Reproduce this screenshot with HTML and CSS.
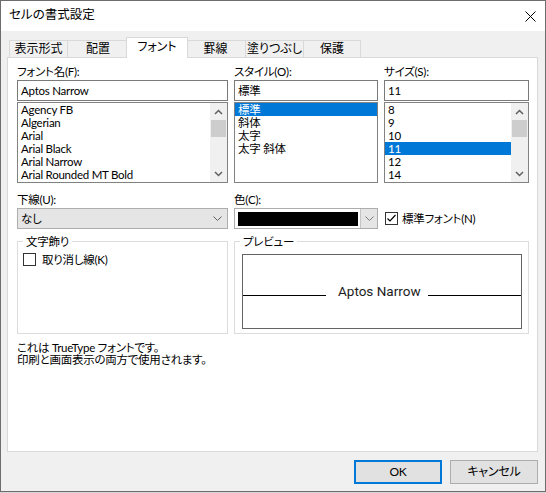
FILE: index.html
```html
<!DOCTYPE html>
<html lang="ja">
<head>
<meta charset="utf-8">
<title>セルの書式設定</title>
<link rel="stylesheet" href="styles.css">
</head>
<body>
<div class="dialog">
  <div class="titlebar">
    <span class="title">セルの書式設定</span>
    <svg class="close" width="11" height="11" viewBox="0 0 11 11"><path d="M0.5 0.5L10.5 10.5M10.5 0.5L0.5 10.5" stroke="#000" stroke-width="1" fill="none"/></svg>
  </div>
  <div class="tabs">
    <div class="tab tab-fmt">表示形式</div>
    <div class="tab tab-align">配置</div>
    <div class="tab tab-font active">フォント</div>
    <div class="tab tab-border">罫線</div>
    <div class="tab tab-fill">塗りつぶし</div>
    <div class="tab tab-protect">保護</div>
  </div>
  <div class="panel">
    <div class="cols">
      <div class="col">
        <div class="label">フォント名(F):</div>
        <div class="textbox">Aptos Narrow</div>
        <div class="list">
          <div class="items">
            <div class="item">Agency FB</div>
            <div class="item">Algerian</div>
            <div class="item">Arial</div>
            <div class="item">Arial Black</div>
            <div class="item">Arial Narrow</div>
            <div class="item">Arial Rounded MT Bold</div>
          </div>
          <div class="sb">
            <div class="sb-btn"><svg width="9" height="6" viewBox="0 0 9 6"><path d="M1 5L4.5 1.5L8 5" fill="none" stroke="#606060" stroke-width="1.5"/></svg></div>
            <div class="sb-thumb"></div>
            <div class="sb-space"></div>
            <div class="sb-btn"><svg width="9" height="6" viewBox="0 0 9 6"><path d="M1 1L4.5 4.5L8 1" fill="none" stroke="#606060" stroke-width="1.5"/></svg></div>
          </div>
        </div>
      </div>
      <div class="col">
        <div class="label">スタイル(O):</div>
        <div class="textbox">標準</div>
        <div class="list">
          <div class="items">
            <div class="item sel">標準</div>
            <div class="item">斜体</div>
            <div class="item">太字</div>
            <div class="item">太字 斜体</div>
          </div>
        </div>
      </div>
      <div class="col">
        <div class="label">サイズ(S):</div>
        <div class="textbox">11</div>
        <div class="list">
          <div class="items">
            <div class="item">8</div>
            <div class="item">9</div>
            <div class="item">10</div>
            <div class="item sel">11</div>
            <div class="item">12</div>
            <div class="item">14</div>
          </div>
          <div class="sb">
            <div class="sb-btn"><svg width="9" height="6" viewBox="0 0 9 6"><path d="M1 5L4.5 1.5L8 5" fill="none" stroke="#606060" stroke-width="1.5"/></svg></div>
            <div class="sb-thumb"></div>
            <div class="sb-space"></div>
            <div class="sb-btn"><svg width="9" height="6" viewBox="0 0 9 6"><path d="M1 1L4.5 4.5L8 1" fill="none" stroke="#606060" stroke-width="1.5"/></svg></div>
          </div>
        </div>
      </div>
    </div>

    <div class="cols row2">
      <div class="col">
        <div class="label">下線(U):</div>
        <div class="combo">
          <span>なし</span>
          <svg class="chev" width="9" height="5" viewBox="0 0 9 5"><path d="M0.5 0.5L4.5 4.5L8.5 0.5" fill="none" stroke="#606060" stroke-width="1"/></svg>
        </div>
      </div>
      <div class="col">
        <div class="label">色(C):</div>
        <div class="colorcombo">
          <div class="swatch-wrap"><div class="swatch"></div></div>
          <div class="cbtn"><svg width="9" height="5" viewBox="0 0 9 5"><path d="M0.5 0.5L4.5 4.5L8.5 0.5" fill="none" stroke="#7a7a7a" stroke-width="1"/></svg></div>
        </div>
      </div>
      <div class="col">
        <div class="label"></div>
        <div class="checkrow">
          <span class="checkbox"><svg width="11" height="11" viewBox="0 0 11 11"><path d="M1.5 5.5L4 8L9.5 2" fill="none" stroke="#000" stroke-width="1.2"/></svg></span>
          <span class="check-label">標準フォント(N)</span>
        </div>
      </div>
    </div>

    <div class="row3">
      <div class="group group-deco">
        <span class="legend">文字飾り</span>
        <div class="checkrow">
          <span class="checkbox"></span>
          <span class="check-label strike-label">取り消し線(K)</span>
        </div>
      </div>
      <div class="group group-preview">
        <span class="legend">プレビュー</span>
        <div class="preview">
          <span class="pline pline-left"></span>
          <span class="ptext">Aptos Narrow</span>
          <span class="pline pline-right"></span>
        </div>
      </div>
    </div>

    <div class="desc">
      <div>これは TrueType フォントです。</div>
      <div>印刷と画面表示の両方で使用されます。</div>
    </div>
  </div>
  <div class="footer">
    <button class="btn btn-default">OK</button>
    <button class="btn">キャンセル</button>
  </div>
</div>
</body>
</html>
```
FILE: styles.css
```css
* { box-sizing: border-box; }
html, body { margin: 0; padding: 0; }
body {
  width: 546px;
  height: 493px;
  background: #d6d6d6;
  font-family: Lato, "Noto Sans CJK JP", sans-serif;
  font-size: 11.5px;
  color: #000;
  font-feature-settings: "palt";
  letter-spacing: -0.25px;
  overflow: hidden;
}
.dialog {
  width: 546px;
  height: 492px;
  border: 1px solid #6d6d6d;
  background: #f0f0f0;
  display: flex;
  flex-direction: column;
}
.titlebar {
  height: 30px;
  flex: none;
  background: #fff;
  display: flex;
  align-items: center;
  justify-content: space-between;
  padding: 0 9px 0 8px;
}
.title { font-size: 12.5px; line-height: 16px; margin-top: -3px; letter-spacing: 0; }
.close { display: block; }

.tabs {
  height: 26px;
  flex: none;
  display: flex;
  align-items: flex-end;
  padding-left: 8px;
}
.tab {
  height: 17px;
  border: 1px solid #d9d9d9;
  border-bottom: none;
  margin-right: -1px;
  background: #f0f0f0;
  text-align: center;
  font-size: 12px;
  letter-spacing: 0;
  line-height: 16px;
  white-space: nowrap;
}
.tab-fmt { width: 59px; }
.tab-align { width: 62px; }
.tab-font { width: 58px; }
.tab-border { width: 61px; }
.tab-fill { width: 59px; }
.tab-protect { width: 58px; }
.tab.active {
  width: 62px;
  height: 21px;
  margin-left: -2px;
  margin-right: -3px;
  margin-bottom: -1px;
  background: #fff;
  line-height: 17px;
  position: relative;
  z-index: 1;
}

.panel {
  flex: none;
  margin: 0 7px 0 6px;
  height: 395px;
  border: 1px solid #d9d9d9;
  background: #fff;
  padding: 5px 0 0 9px;
}
.cols {
  display: grid;
  grid-template-columns: 211px 144px 145px;
  column-gap: 6px;
}
.col { display: flex; flex-direction: column; }
.label { height: 17px; line-height: 17px; white-space: nowrap; }
.textbox {
  height: 21px;
  border: 1px solid #7a7a7a;
  background: #fff;
  padding: 0 3px;
  line-height: 19px;
  white-space: nowrap;
}
.list {
  margin-top: 1px;
  height: 81px;
  border: 1px solid #828282;
  background: #fff;
  display: flex;
}
.items { flex: 1; min-width: 0; }
.item {
  height: 13px;
  line-height: 13px;
  padding-left: 3px;
  white-space: nowrap;
}
.item.sel { background: #0078d7; color: #fff; }
.sb {
  width: 17px;
  flex: none;
  background: #f0f0f0;
  display: flex;
  flex-direction: column;
}
.sb-btn {
  height: 17px;
  display: flex;
  align-items: center;
  justify-content: center;
}
.sb-btn svg { display: block; }
.sb-thumb { height: 17px; background: #cdcdcd; margin: 0 1px; }
.sb-space { flex: 1; }

.row2 { margin-top: 8px; }
.combo {
  height: 21px;
  border: 1px solid #adadad;
  background: #e5e5e5;
  display: flex;
  align-items: center;
  justify-content: space-between;
  padding: 0 5px 0 3px;
  line-height: 19px;
}
.chev { display: block; }
.colorcombo {
  height: 21px;
  border: 1px solid #adadad;
  background: #fff;
  display: flex;
}
.swatch-wrap { flex: 1; padding: 3px 2px 2px 3px; }
.swatch { height: 100%; background: #000; }
.cbtn {
  width: 17px;
  flex: none;
  background: #e5e5e5;
  border-left: 1px solid #c4c4c4;
  display: flex;
  align-items: center;
  justify-content: center;
}
.cbtn svg { display: block; }
.checkrow {
  height: 21px;
  display: flex;
  align-items: center;
}
.checkbox {
  width: 13px;
  height: 13px;
  flex: none;
  border: 1px solid #333;
  background: #fff;
  margin-left: 1px;
  display: flex;
  align-items: center;
  justify-content: center;
}
.checkbox svg { display: block; }
.check-label { margin-left: 4px; line-height: 15px; white-space: nowrap; }

.row3 {
  display: grid;
  grid-template-columns: 211px 295px;
  column-gap: 6px;
  margin-top: 12px;
}
.group {
  position: relative;
  height: 93px;
  border: 1px solid #dcdcdc;
}
.legend {
  position: absolute;
  top: -9px;
  left: 5px;
  padding: 0 3px;
  background: #fff;
  line-height: 17px;
  white-space: nowrap;
}
.group-deco { padding: 11px 0 0 5px; }
.group-deco .checkrow { height: 13px; }
.group-deco .checkbox { margin-left: 0; }
.strike-label { margin-left: 6px; }
.group-preview { padding: 12px 6px 4px 7px; }
.preview {
  width: 280px;
  height: 75px;
  border: 1px solid #646464;
  display: flex;
  align-items: center;
}
.pline { height: 1px; background: #000; margin-top: 8px; }
.pline-left { width: 83px; flex: none; }
.pline-right { flex: 1; }
.ptext {
  font-family: Roboto, "Noto Sans", sans-serif;
  font-size: 13.5px;
  letter-spacing: 0;
  line-height: 17px;
  color: #1c1c1c;
  margin: 0 7px 0 12px;
  white-space: nowrap;
}

.desc { margin-top: 8px; line-height: 12px; }

.footer {
  flex: none;
  display: flex;
  justify-content: flex-end;
  gap: 8px;
  padding: 8px 7px 0 0;
}
.btn {
  width: 88px;
  height: 24px;
  border: 1px solid #adadad;
  background: #e1e1e1;
  font-family: inherit;
  font-size: 12px;
  letter-spacing: -0.2px;
  color: #000;
  padding: 0;
  line-height: 20px;
  font-feature-settings: "palt";
}
.btn-default { border: 2px solid #0078d7; }
```
